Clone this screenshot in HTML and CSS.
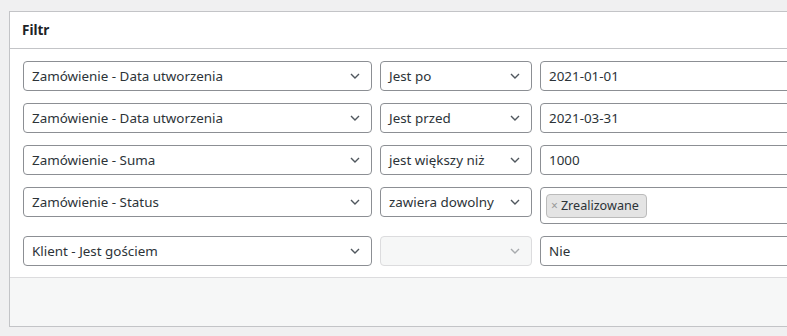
FILE: index.html
```html
<!DOCTYPE html>
<html lang="pl">
<head>
  <meta charset="UTF-8">
  <title>Filtr</title>
  <link rel="stylesheet" href="styles.css">
</head>
<body>
<div class="panel">
  <div class="panel-head">Filtr</div>

  <div class="panel-body">
    <div class="rule">
      <div class="select field">
        <span>Zamówienie - Data utworzenia</span>
        <svg class="chev" viewBox="0 0 10 6"><polyline points="1,1 5,5 9,1"/></svg>
      </div>
      <div class="select op">
        <span>Jest po</span>
        <svg class="chev" viewBox="0 0 10 6"><polyline points="1,1 5,5 9,1"/></svg>
      </div>
      <div class="input value">2021-01-01</div>
    </div>

    <div class="rule">
      <div class="select field">
        <span>Zamówienie - Data utworzenia</span>
        <svg class="chev" viewBox="0 0 10 6"><polyline points="1,1 5,5 9,1"/></svg>
      </div>
      <div class="select op">
        <span>Jest przed</span>
        <svg class="chev" viewBox="0 0 10 6"><polyline points="1,1 5,5 9,1"/></svg>
      </div>
      <div class="input value">2021-03-31</div>
    </div>

    <div class="rule">
      <div class="select field">
        <span>Zamówienie - Suma</span>
        <svg class="chev" viewBox="0 0 10 6"><polyline points="1,1 5,5 9,1"/></svg>
      </div>
      <div class="select op">
        <span>jest większy niż</span>
        <svg class="chev" viewBox="0 0 10 6"><polyline points="1,1 5,5 9,1"/></svg>
      </div>
      <div class="input value">1000</div>
    </div>

    <div class="rule">
      <div class="select field">
        <span>Zamówienie - Status</span>
        <svg class="chev" viewBox="0 0 10 6"><polyline points="1,1 5,5 9,1"/></svg>
      </div>
      <div class="select op">
        <span>zawiera dowolny</span>
        <svg class="chev" viewBox="0 0 10 6"><polyline points="1,1 5,5 9,1"/></svg>
      </div>
      <div class="input value tags">
        <span class="tag"><span class="tag-x">×</span>Zrealizowane</span>
      </div>
    </div>

    <div class="rule">
      <div class="select field">
        <span>Klient - Jest gościem</span>
        <svg class="chev" viewBox="0 0 10 6"><polyline points="1,1 5,5 9,1"/></svg>
      </div>
      <div class="select op disabled">
        <span></span>
        <svg class="chev" viewBox="0 0 10 6"><polyline points="1,1 5,5 9,1"/></svg>
      </div>
      <div class="input value">Nie</div>
    </div>
  </div>

  <div class="panel-foot"></div>
</div>
</body>
</html>
```

FILE: styles.css
```css
body { margin: 0; background: #f0f0f1; font-family: "Noto Sans", "Open Sans", sans-serif; font-size: 13.4px; color: #2c3338; overflow: hidden; }
.panel { margin: 11px 0 0 9px; background: #fff; border: 1px solid #c3c4c7; border-right: 0; overflow: hidden; }
.panel-head { height: 36px; line-height: 36px; padding: 0 12px; font-weight: 700; font-size: 13.5px; color: #1d2327; border-bottom: 1px solid #c3c4c7; }
.panel-body { padding: 12px 13px 11px; display: flex; flex-direction: column; gap: 12px; }
.rule { display: flex; align-items: flex-start; gap: 8px; }
.select, .input { box-sizing: border-box; flex: none; height: 30px; border: 1px solid #8c8f94; border-radius: 4px; background: #fff; padding: 0 8px; display: flex; align-items: center; white-space: nowrap; }
.select { justify-content: space-between; }
.field { width: 349px; }
.op { width: 152px; }
.value { width: 330px; }
.chev { width: 10px; height: 6px; margin-right: 3px; fill: none; stroke: #50575e; stroke-width: 1.4; }
.disabled { background: #f6f7f7; border-color: #dcdcde; }
.disabled .chev { stroke: #a7aaad; }
.tags { height: 37px; padding: 0 5px; }
.tag { box-sizing: border-box; height: 24px; display: inline-flex; align-items: center; padding: 0 7px 0 4px; background: #e4e4e4; border: 1px solid #bbb; border-radius: 4px; font-size: 12.6px; }
.tag-x { color: #999; font-size: 12px; margin-right: 3px; }
.panel-foot { height: 48px; background: #f6f7f7; border-top: 1px solid #dcdcde; }
```
